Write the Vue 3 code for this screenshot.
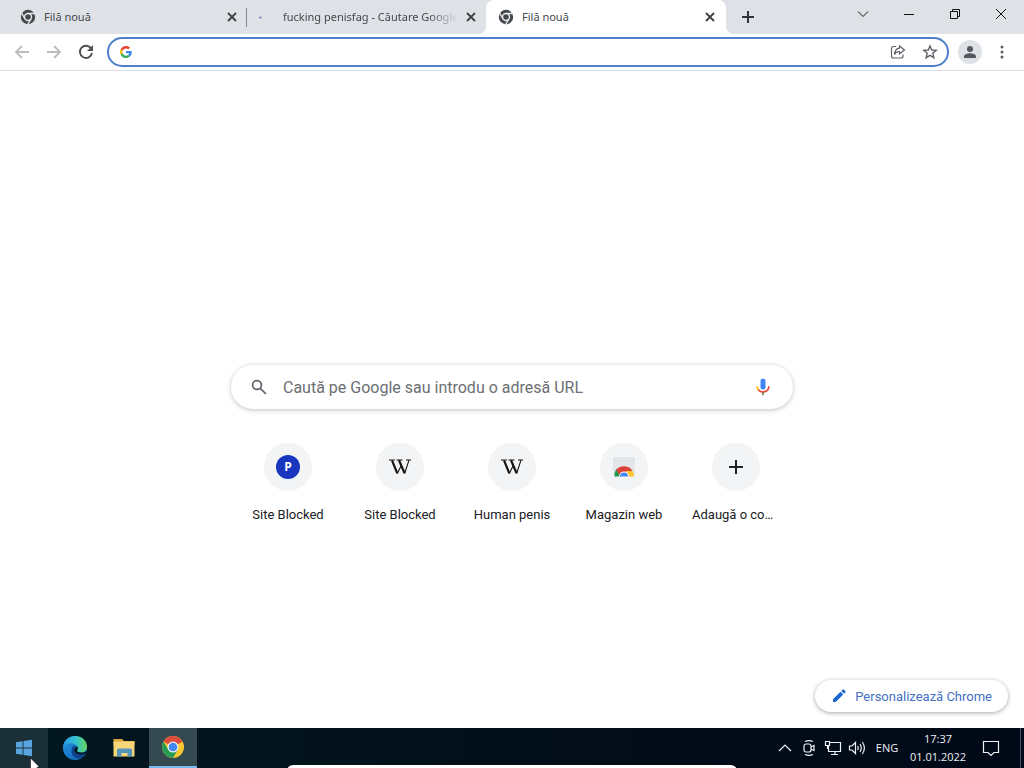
<script setup>
import { ref } from 'vue'

const address = ref('')
const query = ref('')

const tabs = [
  { id: 1, title: 'Filă nouă', icon: 'chrome' },
  { id: 2, title: 'fucking penisfag - Căutare Google', icon: 'loading' },
  { id: 3, title: 'Filă nouă', icon: 'chrome', active: true }
]

const shortcuts = [
  { id: 1, label: 'Site Blocked', icon: 'p' },
  { id: 2, label: 'Site Blocked', icon: 'w' },
  { id: 3, label: 'Human penis', icon: 'w' },
  { id: 4, label: 'Magazin web', icon: 'store' }
]
</script>

<template>
  <div class="desktop">
    <header class="tabstrip">
      <div v-for="tab in tabs" :key="tab.id" class="tab" :class="{ active: tab.active, divided: tab.id === 1 }">
        <svg v-if="tab.icon === 'chrome'" class="favicon" viewBox="0 0 16 16" aria-hidden="true">
          <circle cx="8" cy="8" r="7.2" fill="#44474b" />
          <circle cx="8" cy="8" r="3.5" fill="none" stroke="#e4e7eb" stroke-width="1.4" />
          <path d="M8 4.5H15M5 9.8L1.5 3.8M11 9.8L7.5 15.8" stroke="#e4e7eb" stroke-width="1.3" />
        </svg>
        <svg v-else class="favicon" viewBox="0 0 16 16" aria-hidden="true">
          <circle cx="1.4" cy="8.5" r="1.1" fill="#5d78b8" />
        </svg>
        <span class="tab-title" :class="{ faded: tab.icon === 'loading' }">{{ tab.title }}</span>
        <button class="tab-close" aria-label="Închide fila">
          <svg viewBox="0 0 16 16"><path d="M4 4L12 12M12 4L4 12" stroke="#3c4043" stroke-width="1.8" /></svg>
        </button>
      </div>
      <button class="new-tab" aria-label="Filă nouă">
        <svg viewBox="0 0 16 16"><path d="M8 2V14M2 8H14" stroke="#303338" stroke-width="2" /></svg>
      </button>
      <div class="window-controls">
        <button aria-label="Caută file"><svg viewBox="0 0 16 16"><path d="M3 5.5L8 10.5L13 5.5" /></svg></button>
        <button aria-label="Minimizează"><svg viewBox="0 0 16 16"><path d="M3 8.5H13" /></svg></button>
        <button aria-label="Restabilește"><svg viewBox="0 0 16 16"><path d="M3.5 5.5H10.5V12.5H3.5ZM5.5 5.5V3.5H12.5V10.5H10.5" /></svg></button>
        <button aria-label="Închide"><svg viewBox="0 0 16 16"><path d="M3 3L13 13M13 3L3 13" /></svg></button>
      </div>
    </header>

    <div class="toolbar">
      <button class="nav" aria-label="Înapoi">
        <svg viewBox="0 0 16 16"><path d="M15 8H2M8 2L2 8L8 14" stroke="#babcbe" stroke-width="1.8" fill="none" /></svg>
      </button>
      <button class="nav" aria-label="Înainte">
        <svg viewBox="0 0 16 16"><path d="M1 8H14M8 2L14 8L8 14" stroke="#babcbe" stroke-width="1.8" fill="none" /></svg>
      </button>
      <button class="nav" aria-label="Reîncarcă">
        <svg viewBox="0 0 16 16"><path d="M13.2 4.6A6.1 6.1 0 1 0 14 9" stroke="#4c5054" stroke-width="1.9" fill="none" /><path d="M15 1V7H9Z" fill="#4c5054" /></svg>
      </button>
      <div class="omnibox">
        <svg class="google" viewBox="0 0 48 48" aria-hidden="true">
          <path fill="#ea4335" d="M24 9.5c3.5 0 6.700 1.200 9.200 3.600l6.900-6.900C35.900 2.400 30.500 0 24 0 14.600 0 6.500 5.400 2.600 13.200l8 6.200C12.400 13.700 17.700 9.500 24 9.500z" />
          <path fill="#4285f4" d="M47 24.500c0-1.600-.2-3.100-.4-4.500H24v9h12.900c-.6 3-2.300 5.500-4.800 7.200l7.700 6C44.400 38 47 31.800 47 24.500z" />
          <path fill="#fbbc05" d="M10.500 28.600a14.500 14.500 0 0 1 0-9.200l-8-6.200a24 24 0 0 0 0 21.600z" />
          <path fill="#34a853" d="M24 48c6.500 0 11.900-2.100 15.900-5.800l-7.700-6c-2.200 1.500-4.900 2.300-8.200 2.300-6.300 0-11.600-4.200-13.500-9.900l-8 6.200C6.500 42.600 14.600 48 24 48z" />
        </svg>
        <input v-model="address" type="text" aria-label="Bară de adrese" />
        <button class="omni-action" aria-label="Distribuie">
          <svg viewBox="0 0 16 16" fill="none" stroke="#5f6368" stroke-width="1.2"><path d="M6 2.500H3.500A2 2 0 0 0 1.500 4.500V12A2 2 0 0 0 3.500 14H11A2 2 0 0 0 13 12V10.500M9.500 2L14.500 6L9.500 9.800V7.500C7 7.500 5.500 8.500 4.500 10.500C4.700 7 6.500 4.500 9.500 4.200Z" /></svg>
        </button>
        <button class="omni-action" aria-label="Adaugă la marcaje">
          <svg viewBox="0 0 16 16" fill="none" stroke="#5f6368" stroke-width="1.4"><path d="M8 1.900L9.700 6L14.200 6.400L10.800 9.300L11.900 13.700L8 11.300L4.100 13.700L5.200 9.300L1.800 6.400L6.300 6Z" /></svg>
        </button>
      </div>
      <button class="profile" aria-label="Profil">
        <svg viewBox="0 0 16 16" fill="#53585f"><circle cx="8" cy="5" r="3" /><path d="M2 14V12.500C2 10.300 5.500 9.300 8 9.300S14 10.300 14 12.500V14Z" /></svg>
      </button>
      <button class="more" aria-label="Meniu">
        <svg viewBox="0 0 16 16" fill="#5a5e63"><circle cx="8" cy="3" r="1.500" /><circle cx="8" cy="8" r="1.500" /><circle cx="8" cy="13" r="1.500" /></svg>
      </button>
    </div>

    <main class="page">
      <form class="search" role="search" @submit.prevent>
        <svg class="search-icon" viewBox="0 0 16 16" fill="none" stroke="#5f6368" stroke-width="1.700"><circle cx="6" cy="6" r="4.400" /><path d="M9.300 9.300L15 15" /></svg>
        <input v-model="query" type="text" aria-label="Caută" placeholder="Caută pe Google sau introdu o adresă URL" />
        <button type="button" class="mic" aria-label="Căutare vocală">
          <svg viewBox="0 0 24 24">
            <rect x="9" y="2" width="6" height="13" rx="2.500" fill="#4285f4" />
            <path d="M5 11A7 7 0 0 0 7 16" fill="none" stroke="#fbbc05" stroke-width="2" />
            <path d="M6.500 15.300A7 7 0 0 0 19 11" fill="none" stroke="#ea4335" stroke-width="2" />
            <path d="M12 18V22" stroke="#6a7f55" stroke-width="2" />
          </svg>
        </button>
      </form>

      <nav class="shortcuts" aria-label="Comenzi rapide">
        <a v-for="item in shortcuts" :key="item.id" class="shortcut" href="#">
          <span class="tile">
            <span v-if="item.icon === 'p'" class="letter-p">P</span>
            <svg v-else-if="item.icon === 'w'" viewBox="0 0 24 24" fill="none" stroke="#151515">
              <path d="M1 5H7M8.500 5H14.500M18 5H23" stroke-width="1" />
              <path d="M4 5.300L9.300 18.300M11 5.300L16.600 18.300" stroke-width="2.200" />
              <path d="M9.300 18.500L13 11M16.600 18.500L21 5.200" stroke-width="1.100" />
            </svg>
            <svg v-else viewBox="0 0 24 24">
              <path d="M1 2H23V18Q23 21 20 21H4Q1 21 1 18Z" fill="#e3e6e8" />
              <path d="M2.500 21.500V19A9.500 9.500 0 0 1 5 13.500L9 21.500Z" fill="#21984f" />
              <path d="M4 15A9.500 8.500 0 0 1 20.500 16L13 18L8 20Z" fill="#dd4037" />
              <path d="M14 16H20.500Q22 18.500 22 21.500H15Z" fill="#fbc52d" />
              <path d="M7 21.500A5 5 0 0 1 17 21.500Z" fill="#fff" />
              <path d="M8 21.500A4 4 0 0 1 16 21.500Z" fill="#4285f4" />
            </svg>
          </span>
          <span class="label">{{ item.label }}</span>
        </a>
        <button class="shortcut">
          <span class="tile"><svg viewBox="0 0 24 24"><path d="M12 5V19M5 12H19" stroke="#202124" stroke-width="2" /></svg></span>
          <span class="label">Adaugă o comandă rapidă</span>
        </button>
      </nav>

      <button class="customize">
        <svg viewBox="0 0 16 16" fill="#1967d2"><path d="M2 11.300L9.500 3.800L12.200 6.500L4.700 14H2ZM10.300 3L11.700 1.600Q12.200 1.100 12.700 1.600L14.400 3.300Q14.900 3.800 14.400 4.300L13 5.700Z" /></svg>
        <span>Personalizează Chrome</span>
      </button>
    </main>

    <footer class="taskbar">
      <button class="task start" aria-label="Start">
        <svg viewBox="0 0 24 24" fill="#59a4df"><path d="M4 6.200L10.600 5.200V11.500H4ZM11.500 5L20 3.800V11.500H11.500ZM4 12.500H10.600V18.800L4 17.800ZM11.500 12.500H20V20.200L11.500 19Z" /></svg>
      </button>
      <button class="task" aria-label="Microsoft Edge">
        <svg viewBox="0 0 24 24">
          <defs>
            <linearGradient id="edge-top" x1="0" y1="0" x2="1" y2="0"><stop offset="0" stop-color="#2a9be0" /><stop offset=".55" stop-color="#36c2cf" /><stop offset="1" stop-color="#65d856" /></linearGradient>
            <linearGradient id="edge-low" x1="0" y1="0" x2="1" y2="1"><stop offset="0" stop-color="#2398e6" /><stop offset="1" stop-color="#0b5fae" /></linearGradient>
          </defs>
          <circle cx="12" cy="12" r="12" fill="url(#edge-low)" />
          <path d="M0 11C.8 4.500 6 0 12 0C19 0 24 5 24 10.500C24 14.500 21 16.500 18 16.500C15 16.500 13.500 15.500 13.800 14.800C15 13.500 15 12 14.500 10.800C13 6.500 3.500 5.500 0 11Z" fill="url(#edge-top)" />
          <path d="M9.500 11C6.500 16 10 22.500 16.500 22.700C19.500 21.900 21.800 20 22.800 17.800C19 20 12.500 19 11 15.500C10.300 13.500 11 11.500 12.500 10.500C11.500 9.700 10.200 10 9.500 11Z" fill="#10438c" />
          <path d="M14 14.800C15 13.400 15 11.800 14.300 10.600C12.500 10.700 11 12.500 11.100 14.500C12 18.700 18.500 20 23 17.400L24.500 17V15L22 15.900C18 17.300 14 16.200 14 14.800Z" fill="#031923" />
        </svg>
      </button>
      <button class="task" aria-label="Explorator de fișiere">
        <svg viewBox="0 0 24 24">
          <path d="M1.500 3H10L12 5H22.500V9H1.500Z" fill="#dba93c" />
          <path d="M1.500 5.500H22.500V20.500H1.500Z" fill="#f7d678" />
          <path d="M5 20.500V14Q5 12.500 6.500 12.500H18.500Q20 12.500 20 14V20.500H15.500V17H9.500V20.500Z" fill="#5596bd" />
        </svg>
      </button>
      <button class="task current" aria-label="Google Chrome">
        <svg viewBox="0 0 24 24">
          <circle cx="12" cy="12" r="11" fill="#f8c832" />
          <path d="M12 12L2.500 6.500A11 11 0 0 1 21.500 6.500Z" fill="#df4a3e" />
          <path d="M2.500 6.500A11 11 0 0 0 12 23L16.800 14.700L12 12L7.200 14.600Z" fill="#279b56" />
          <path d="M12 6.500H21.500" stroke="#df4a3e" />
          <circle cx="12" cy="12" r="5.500" fill="#f1f3f4" />
          <circle cx="12" cy="12" r="4.300" fill="#4286ef" />
        </svg>
      </button>
      <div class="tray">
        <button aria-label="Afișează pictogramele ascunse"><svg viewBox="0 0 18 18"><path d="M3 12L9 6L15 12" /></svg></button>
        <button aria-label="Meet Now"><svg viewBox="0 0 18 18"><rect x="4" y="5" width="7" height="8" rx="2" /><path d="M11 8L14 6.500V11.500L11 10M5 2.500Q9 .8 13 2.500M5 15.500Q9 17.200 13 15.500" /></svg></button>
        <button aria-label="Rețea"><svg viewBox="0 0 18 18"><path d="M6 3.500H16.500V12.500H4.500V7M11 12.500V15.500M7 15.500H14M1.500 2.500H5.500V6.500H1.500ZM3.500 6.500V10" /></svg></button>
        <button aria-label="Volum"><svg viewBox="0 0 18 18"><path d="M1.500 7H4L7.500 3.500V14.500L4 11H1.500ZM9.500 7Q11 9 9.500 11M12 5Q14.500 9 12 13M14.300 3Q18.500 9 14.300 15" /></svg></button>
        <button class="language">ENG</button>
        <button class="clock"><span>17:37</span><span>01.01.2022</span></button>
        <button class="notice" aria-label="Notificări"><svg viewBox="0 0 18 18"><path d="M1.500 2.500H16.500V13.500H12L9 16.500L6 13.500H1.500Z" /></svg></button>
      </div>
      <div class="popup-edge"></div>
      <svg class="pointer" viewBox="0 0 10 12" aria-hidden="true"><path d="M.5 0V14L9 8.500Z" fill="#fff" stroke="#111" stroke-width=".6" /></svg>
    </footer>
  </div>
</template>

<style>
body {
  margin: 0;
}
</style>

<style scoped>
.desktop {
  display: flex;
  flex-direction: column;
  min-height: 100vh;
  background: #fff;
  font-family: Roboto, "Liberation Sans", sans-serif;
}
.desktop * {
  box-sizing: border-box;
}
button {
  display: flex;
  align-items: center;
  justify-content: center;
  flex: none;
  padding: 0;
  border: 0;
  background: none;
  color: inherit;
  font: inherit;
}
svg {
  display: block;
  flex: none;
  width: 16px;
  height: 16px;
}
input {
  min-width: 0;
  flex: 1;
  padding: 0;
  border: 0;
  outline: 0;
  background: none;
  font: inherit;
}

.tabstrip {
  display: flex;
  height: 34px;
  padding-left: 8px;
  background: #dee1e6;
}
.tab {
  position: relative;
  display: flex;
  align-items: center;
  flex: 0 1 239px;
  min-width: 0;
  padding: 0 7px 0 12px;
  color: #45494d;
  font: 11px/16px "Noto Sans", "Open Sans", sans-serif;
}
.tab.divided::after {
  content: "";
  position: absolute;
  right: 0;
  top: 8px;
  width: 1px;
  height: 19px;
  background: #85888d;
}
.tab.active {
  flex-basis: 240px;
  padding-right: 8px;
  border-radius: 8px 8px 0 0;
  background: #fff;
}
.tab.active::before,
.tab.active::after {
  content: "";
  position: absolute;
  bottom: 0;
  width: 8px;
  height: 8px;
}
.tab.active::before {
  right: 100%;
  background: radial-gradient(circle at 0 0, #dee1e6 8px, #fff 8px);
}
.tab.active::after {
  left: 100%;
  background: radial-gradient(circle at 100% 0, #dee1e6 8px, #fff 8px);
}
.tab-title {
  flex: 1;
  margin: 0 6px 0 8px;
  overflow: hidden;
  white-space: nowrap;
}
.tab-title.faded {
  mask-image: linear-gradient(to right, #000 84%, transparent);
}
.new-tab {
  width: 44px;
}
.window-controls {
  display: flex;
  height: 28px;
  margin-left: auto;
}
.window-controls button {
  width: 46px;
}
.window-controls path {
  fill: none;
  stroke: #111;
  stroke-width: 1;
}

.toolbar {
  display: flex;
  align-items: center;
  height: 37px;
  padding: 0 14px 0 6px;
  border-bottom: 1px solid #dadce0;
}
.nav {
  width: 32px;
  height: 32px;
}
.omnibox {
  display: flex;
  align-items: center;
  flex: 1;
  height: 30px;
  margin: 0 9px 0 5px;
  padding: 0 1px 0 11px;
  border: 2px solid #4f7fc8;
  border-radius: 15px;
  font-size: 14px;
}
.google {
  width: 12px;
  height: 12px;
  margin-right: 8px;
}
.omni-action {
  width: 32px;
  height: 26px;
}
.profile {
  width: 24px;
  height: 24px;
  margin-right: 12px;
  border-radius: 50%;
  background: #dee1e6;
}
.more {
  width: 16px;
}

.page {
  position: relative;
  flex: 1;
  padding: 294px 16px 0;
}
.search {
  display: flex;
  align-items: center;
  max-width: 562px;
  height: 44px;
  margin: 0 auto;
  padding: 0 20px;
  border-radius: 22px;
  box-shadow: 0 1px 5px rgba(32, 33, 36, 0.28);
}
.search-icon {
  margin-right: 16px;
}
.search input {
  padding-top: 2px;
  font-size: 16px;
  line-height: 20px;
}
.search input::placeholder {
  color: #6c6f73;
  opacity: 1;
}
.mic svg {
  width: 20px;
  height: 20px;
}
.shortcuts {
  display: flex;
  justify-content: center;
  margin-top: 34px;
}
.shortcut {
  display: flex;
  flex-direction: column;
  width: 112px;
  align-items: center;
  justify-content: flex-start;
  color: #202124;
  font-size: 13px;
  line-height: 16px;
  text-decoration: none;
}
.tile {
  display: flex;
  align-items: center;
  justify-content: center;
  width: 48px;
  height: 48px;
  border-radius: 50%;
  background: #f3f4f5;
}
.tile svg {
  width: 24px;
  height: 24px;
}
.letter-p {
  width: 24px;
  height: 24px;
  border-radius: 50%;
  background: #1836bf;
  color: #fff;
  font: bold 12px/24px "Open Sans", sans-serif;
  text-align: center;
}
.label {
  width: 88px;
  margin-top: 16px;
  overflow: hidden;
  text-align: center;
  text-overflow: ellipsis;
  white-space: nowrap;
}
.customize {
  position: absolute;
  right: 16px;
  bottom: 16px;
  gap: 8px;
  height: 32px;
  padding: 0 16px;
  border-radius: 16px;
  background: #fff;
  box-shadow: 0 1px 4px rgba(32, 33, 36, 0.4);
  color: #3f70c4;
  font-size: 13px;
}

.taskbar {
  position: relative;
  display: flex;
  height: 40px;
  overflow: hidden;
  background: linear-gradient(to right, #031820, #020d18 60%, #010918);
  color: #eef1f5;
  font: 11px/18px "Open Sans", "Noto Sans", sans-serif;
}
.task {
  width: 48px;
  margin-right: 1px;
}
.task svg {
  width: 24px;
  height: 24px;
}
.task.start {
  margin-right: 3px;
  background: #1b2f37;
}
.current {
  border-bottom: 2px solid #76b9ed;
  background: #344950;
}
.tray {
  display: flex;
  margin: 0 3px 0 auto;
  padding-right: 9px;
  border-right: 1px solid #4b5563;
}
.tray button {
  width: 24px;
}
.tray svg {
  width: 18px;
  height: 18px;
}
.tray path,
.tray rect {
  fill: none;
  stroke: #eef1f5;
  stroke-width: 1.2;
}
.tray .language {
  width: 36px;
}
.tray .clock {
  flex-direction: column;
  width: 66px;
}
.tray .notice {
  width: 40px;
}
.popup-edge {
  position: absolute;
  left: 28%;
  right: 28%;
  top: 37px;
  height: 12px;
  border-radius: 8px;
  background: #fff;
}
.pointer {
  position: absolute;
  left: 30px;
  top: 30px;
  width: 10px;
  height: 12px;
}
</style>
